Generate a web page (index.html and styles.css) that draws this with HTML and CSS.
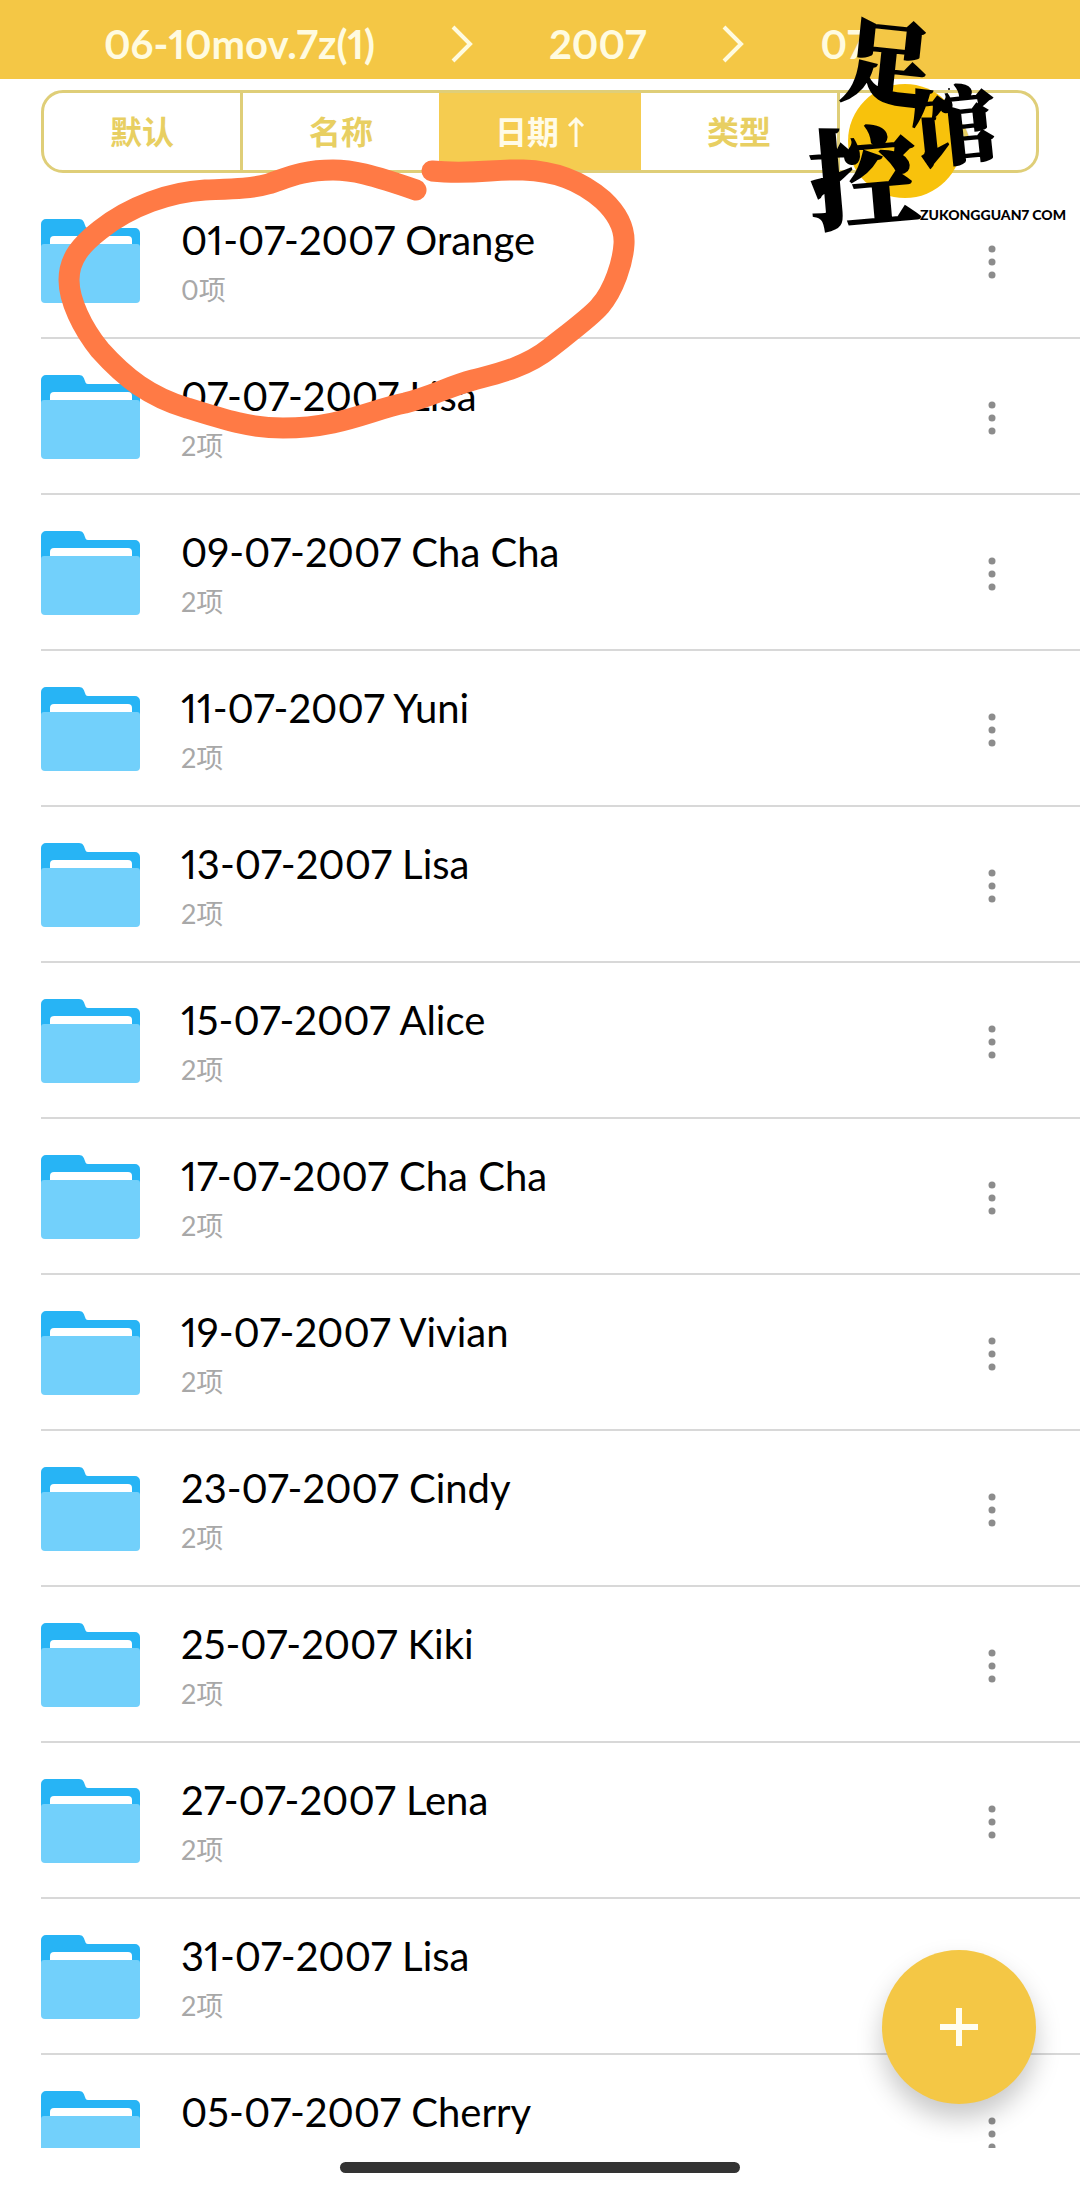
FILE: index.html
```html
<!DOCTYPE html>
<html lang="zh-CN">
<head>
    <meta charset="UTF-8">
    <meta name="viewport" content="width=device-width, initial-scale=1.0">
    <title>2007 / 07</title>
    <link rel="stylesheet" href="styles.css">
</head>
<body>
    <!-- shared shapes -->
    <svg class="defs" width="0" height="0" aria-hidden="true">
        <symbol id="folder" viewBox="0 0 99 84">
            <path fill="#27b4f5" d="M0 30V5a5 5 0 0 1 5-5h33c4 0 5 3 6 6 .6 2 1 3 3 3h47a5 5 0 0 1 5 5v16z"/>
            <path fill="#fff" d="M9 26v-5a4 4 0 0 1 4-4h74a4 4 0 0 1 4 4v5z"/>
            <path fill="#72d0fb" d="M0 28a3 3 0 0 1 3-3h93a3 3 0 0 1 3 3v52a4 4 0 0 1-4 4H4a4 4 0 0 1-4-4z"/>
        </symbol>
        <symbol id="dots" viewBox="0 0 8 34">
            <circle cx="4" cy="4" r="3.5"/>
            <circle cx="4" cy="17" r="3.5"/>
            <circle cx="4" cy="30" r="3.5"/>
        </symbol>
        <symbol id="chevron" viewBox="0 0 22 38">
            <path d="M2 2l17 17L2 36" fill="none" stroke="#fffbe0" stroke-width="4"/>
        </symbol>
    </svg>

    <nav class="path_bar">
        <a href="#">06-10mov.7z(1)</a>
        <svg class="chevron"><use href="#chevron"/></svg>
        <a href="#">2007</a>
        <svg class="chevron"><use href="#chevron"/></svg>
        <a href="#">07</a>
    </nav>

    <div class="sort_bar">
        <button type="button" class="sort">默认</button>
        <button type="button" class="sort">名称</button>
        <button type="button" class="sort sort_on">日期
            <svg class="arrow" viewBox="0 0 18 32"><path d="M9 31V3M2 10l7-7 7 7" fill="none" stroke="#fffbe8" stroke-width="3"/></svg>
        </button>
        <button type="button" class="sort">类型</button>
        <button type="button" class="sort">大小</button>
    </div>

    <ul class="files">
        <li class="file">
            <svg class="folder"><use href="#folder"/></svg>
            <div class="info"><div class="name">01-07-2007 Orange</div><div class="count">0项</div></div>
            <button type="button" class="more" aria-label="更多"><svg><use href="#dots"/></svg></button>
        </li>
        <li class="file">
            <svg class="folder"><use href="#folder"/></svg>
            <div class="info"><div class="name">07-07-2007 Lisa</div><div class="count">2项</div></div>
            <button type="button" class="more" aria-label="更多"><svg><use href="#dots"/></svg></button>
        </li>
        <li class="file">
            <svg class="folder"><use href="#folder"/></svg>
            <div class="info"><div class="name">09-07-2007 Cha Cha</div><div class="count">2项</div></div>
            <button type="button" class="more" aria-label="更多"><svg><use href="#dots"/></svg></button>
        </li>
        <li class="file">
            <svg class="folder"><use href="#folder"/></svg>
            <div class="info"><div class="name">11-07-2007 Yuni</div><div class="count">2项</div></div>
            <button type="button" class="more" aria-label="更多"><svg><use href="#dots"/></svg></button>
        </li>
        <li class="file">
            <svg class="folder"><use href="#folder"/></svg>
            <div class="info"><div class="name">13-07-2007 Lisa</div><div class="count">2项</div></div>
            <button type="button" class="more" aria-label="更多"><svg><use href="#dots"/></svg></button>
        </li>
        <li class="file">
            <svg class="folder"><use href="#folder"/></svg>
            <div class="info"><div class="name">15-07-2007 Alice</div><div class="count">2项</div></div>
            <button type="button" class="more" aria-label="更多"><svg><use href="#dots"/></svg></button>
        </li>
        <li class="file">
            <svg class="folder"><use href="#folder"/></svg>
            <div class="info"><div class="name">17-07-2007 Cha Cha</div><div class="count">2项</div></div>
            <button type="button" class="more" aria-label="更多"><svg><use href="#dots"/></svg></button>
        </li>
        <li class="file">
            <svg class="folder"><use href="#folder"/></svg>
            <div class="info"><div class="name">19-07-2007 Vivian</div><div class="count">2项</div></div>
            <button type="button" class="more" aria-label="更多"><svg><use href="#dots"/></svg></button>
        </li>
        <li class="file">
            <svg class="folder"><use href="#folder"/></svg>
            <div class="info"><div class="name">23-07-2007 Cindy</div><div class="count">2项</div></div>
            <button type="button" class="more" aria-label="更多"><svg><use href="#dots"/></svg></button>
        </li>
        <li class="file">
            <svg class="folder"><use href="#folder"/></svg>
            <div class="info"><div class="name">25-07-2007 Kiki</div><div class="count">2项</div></div>
            <button type="button" class="more" aria-label="更多"><svg><use href="#dots"/></svg></button>
        </li>
        <li class="file">
            <svg class="folder"><use href="#folder"/></svg>
            <div class="info"><div class="name">27-07-2007 Lena</div><div class="count">2项</div></div>
            <button type="button" class="more" aria-label="更多"><svg><use href="#dots"/></svg></button>
        </li>
        <li class="file">
            <svg class="folder"><use href="#folder"/></svg>
            <div class="info"><div class="name">31-07-2007 Lisa</div><div class="count">2项</div></div>
            <button type="button" class="more" aria-label="更多"><svg><use href="#dots"/></svg></button>
        </li>
        <li class="file">
            <svg class="folder"><use href="#folder"/></svg>
            <div class="info"><div class="name">05-07-2007 Cherry</div></div>
            <button type="button" class="more" aria-label="更多"><svg><use href="#dots"/></svg></button>
        </li>
    </ul>

    <div class="home_bar"><div class="home_pill"></div></div>

    <button type="button" class="add" aria-label="新建">
        <svg viewBox="0 0 38 38"><path d="M19 0v38M0 19h38" stroke="#fffdf0" stroke-width="6"/></svg>
    </button>

    <!-- hand drawn ring -->
    <svg class="ring" viewBox="0 0 660 460" aria-hidden="true">
        <path d="M432 171C470 175 495 169 523 170C555 171 580 180 603 200C618 214 625 228 624 244C623 262 614 290 600 306C592 316 565 336 550 348C525 368 495 374 473 380C450 386 430 397 405 403C370 410 340 428 283 428C250 428 225 420 187 408C150 397 125 378 100 350C82 328 69 300 69 280C69 258 82 244 100 230C130 206 170 192 205 190C230 189 250 189 268 184C285 179 300 170 333 170C352 170 370 174 416 190"/>
    </svg>

    <svg class="stamp" viewBox="0 0 280 240">
        <circle cx="105" cy="141" r="57" fill="#f8c20c"/>
        <circle cx="149" cy="89" r="1"/>
        <text class="brush brush_m" x="42" y="97" transform="rotate(6 85 60)">足</text>
        <text class="brush brush_s" x="112" y="158" transform="rotate(-6 150 126)">馆</text>
        <text class="brush brush_l" x="10" y="218" transform="rotate(-5 64 178)">控</text>
        <text class="site" x="120" y="220">ZUKONGGUAN7 COM</text>
    </svg>
</body>
</html>
```
FILE: styles.css
```css
*{
    box-sizing:border-box;
}
body{
    margin:0;
    height:100vh;
    display:flex;
    flex-direction:column;
    position:relative;
    overflow:hidden;
    background:#fff;
    font-family:Lato, "Noto Sans CJK SC", sans-serif;
    font-variant-numeric:proportional-nums;
}
button{
    border:0;
    padding:0;
    background:none;
    font-family:inherit;
}
.defs{
    position:absolute;
}

/* top bar */
.path_bar{
    flex:none;
    height:79px;
    padding:8px 0 0 104px;
    display:flex;
    align-items:center;
    gap:76px;
    background:#f4c745;
}
.path_bar a{
    color:#fffbe0;
    font-size:40px;
    line-height:48px;
    font-weight:700;
    text-decoration:none;
}
.chevron{
    width:22px;
    height:38px;
}

/* sort tabs */
.sort_bar{
    flex:none;
    display:flex;
    height:83px;
    margin:11px 41px 10px;
    border:3px solid #dfce78;
    border-radius:22px;
    overflow:hidden;
}
.sort{
    flex:1;
    display:flex;
    align-items:center;
    justify-content:center;
    gap:8px;
    color:#e8cf62;
    font-size:32px;
    line-height:40px;
    font-weight:700;
}
.sort + .sort{
    border-left:3px solid #dfce78;
}
.sort.sort_on{
    background:#f5cc50;
    border-color:#f5cc50;
    color:#fffbe8;
}
.sort_on + .sort{
    border-color:#f5cc50;
}
.arrow{
    width:18px;
    height:32px;
}

/* file list */
.files{
    flex:1;
    min-height:0;
    margin:0;
    padding:0 0 0 41px;
    list-style:none;
    overflow:hidden;
}
.file{
    display:flex;
    align-items:flex-start;
    height:156px;
    padding-top:36px;
    border-bottom:2px solid #d8d8d8;
}
.folder{
    flex:none;
    width:99px;
    height:84px;
}
.info{
    flex:1;
    padding-left:41px;
}
.name{
    color:#000;
    font-size:40px;
    line-height:42px;
}
.count{
    margin-top:11px;
    color:#a8a8a8;
    font-size:27px;
    line-height:36px;
}
.more{
    width:60px;
    height:86px;
    margin-right:58px;
    fill:#8c8c8c;
}
.more svg{
    display:block;
    width:8px;
    height:34px;
    margin:0 auto;
}

/* bottom gesture bar */
.home_bar{
    flex:none;
    height:44px;
    padding-top:14px;
}
.home_pill{
    width:37%;
    height:11px;
    margin:0 auto;
    border-radius:6px;
    background:#333;
}

.add{
    position:absolute;
    right:44px;
    bottom:88px;
    width:154px;
    height:154px;
    border-radius:50%;
    background:#f4c745;
    box-shadow:0 14px 26px rgba(0,0,0,0.22);
}
.add svg{
    display:block;
    width:38px;
    height:38px;
    margin:0 auto;
}

.ring{
    position:absolute;
    left:0;
    top:0;
    width:660px;
    height:460px;
    fill:none;
    stroke:#ff7a45;
    stroke-width:21;
    stroke-linecap:round;
    pointer-events:none;
}

.stamp{
    position:absolute;
    right:0;
    top:0;
    width:280px;
    height:240px;
    overflow:visible;
    pointer-events:none;
}
.brush{
    font-family:"Noto Serif CJK SC", "Noto Sans CJK SC", sans-serif;
    font-weight:900;
    stroke:#000;
    stroke-width:2;
}
.brush_s{
    font-size:84px;
}
.brush_m{
    font-size:92px;
}
.brush_l{
    font-size:108px;
}
.site{
    font-size:14px;
    font-weight:900;
}
```
